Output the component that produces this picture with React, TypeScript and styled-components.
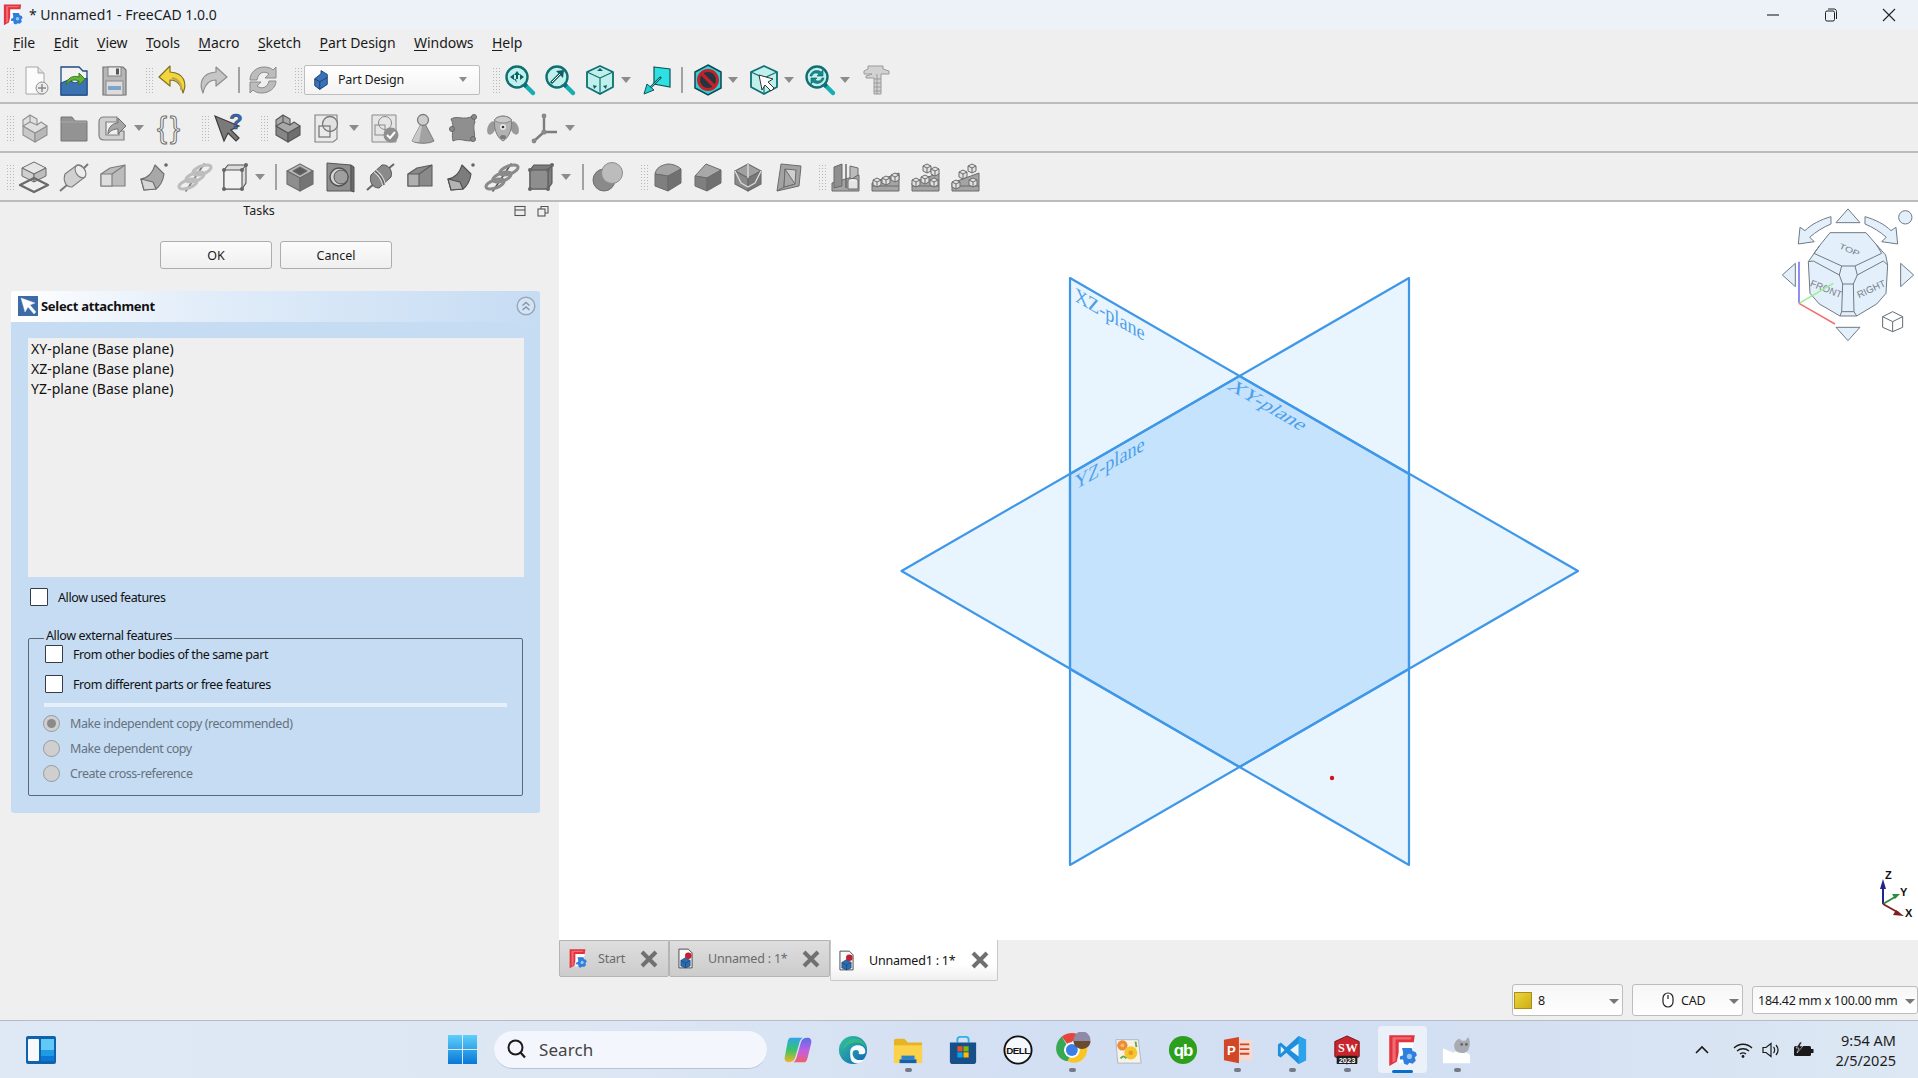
import React from "react";
import styled, { createGlobalStyle } from "styled-components";

const Global = createGlobalStyle`
  html, body { margin: 0; padding: 0; background: #efefef; overflow: hidden; }
  body { font-family: "Noto Sans", "Open Sans", "Liberation Sans", sans-serif; color: #111; }
  * { box-sizing: border-box; }
`;

const Page = styled.div`width:1918px;height:1078px;display:flex;flex-direction:column;overflow:hidden;background:#efefef;`;

/* ---------- title + menu ---------- */
const TitleBar = styled.div`height:29px;flex:none;display:flex;align-items:center;padding-left:1px;background:#edf2f9;`;
const TitleText = styled.span`font-size:14px;margin-left:5px;color:#1c1c1c;`;
const WinControls = styled.div`margin-left:auto;display:flex;`;
const WinBtn = styled.div`width:58px;height:29px;display:flex;align-items:center;justify-content:center;`;
const MenuBar = styled.div`height:26px;flex:none;display:flex;align-items:center;gap:18.5px;padding-left:13px;`;
const MenuItem = styled.span`font-size:14px;letter-spacing:-.05px;color:#1a1a1a;u{text-underline-offset:2px;text-decoration-thickness:1px;}`;

/* ---------- toolbars ---------- */
const Toolbar = styled.div<{ $h: number; $pt?: number }>`height:${p => p.$h}px;padding-top:${p => p.$pt || 0}px;flex:none;display:flex;align-items:center;border-bottom:2px solid #bcbcbc;`;
const Grip = styled.div<{ $ml: number }>`width:8px;height:26px;margin-left:${p => p.$ml}px;flex:none;background-image:radial-gradient(#b8b8b8 .9px,transparent 1px);background-size:3px 3px;`;
const Sep = styled.div<{ $ml: number }>`width:2px;height:26px;margin-left:${p => p.$ml}px;flex:none;background:#a2a2a2;`;
const ToolIcon = styled.div<{ $ml: number }>`width:32px;height:32px;margin-left:${p => p.$ml}px;flex:none;svg{display:block;overflow:visible;}`;
const Drop = styled.div<{ $ml: number }>`width:12px;height:6px;margin-left:${p => p.$ml}px;flex:none;display:flex;justify-content:center;
  &::before{content:"";border-left:5px solid transparent;border-right:5px solid transparent;border-top:6px solid #8c8c8c;}`;
const WbCombo = styled.div`width:176px;height:30px;margin-left:2px;flex:none;display:flex;align-items:center;padding-left:6px;border:1px solid #bdbdbd;border-radius:2px;background:linear-gradient(#fff,#f3f3f3);font-size:12.5px;letter-spacing:-.2px;color:#1a1a1a;`;
const WbLabel = styled.span`margin-left:7px;flex:1;`;
const WbArrow = styled.i`margin-right:12px;border-left:4px solid transparent;border-right:4px solid transparent;border-top:5px solid #8c8c8c;`;

/* ---------- main ---------- */
const Main = styled.div`flex:1;min-height:0;display:flex;`;
const Dock = styled.div`width:559px;flex:none;display:flex;flex-direction:column;background:#efefef;`;
const DockHead = styled.div`height:18px;display:flex;align-items:center;justify-content:center;position:relative;padding:0 41px 2px 0;font-size:12.5px;color:#222;`;
const DockIcons = styled.div`position:absolute;right:10px;top:3px;display:flex;gap:11px;`;
const ButtonRow = styled.div`display:flex;gap:8px;margin:21px 0 0 160px;`;
const PushBtn = styled.div`width:112px;height:28px;display:flex;align-items:center;justify-content:center;border:1px solid #adadad;border-radius:3px;background:linear-gradient(#fbfbfb,#efefef);font-size:12.5px;color:#1a1a1a;`;
const TaskBox = styled.div`width:529px;margin:22px 0 0 11px;border-radius:3px;overflow:hidden;`;
const TaskHead = styled.div`height:31px;display:flex;align-items:center;padding:0 4px 2px 7px;background:linear-gradient(90deg,#fff 0%,#e2edf9 35%,#c6dcf3 100%);`;
const TaskTitle = styled.span`font-size:13px;font-weight:700;letter-spacing:-.3px;margin-left:3px;color:#111;flex:1;`;
const TaskBody = styled.div`background:#c5dcf3;padding:16px 16px 17px 17px;height:491px;`;
const ListBox = styled.div`width:496px;height:239px;background:#efefef;padding:1px 3px;font-size:14px;line-height:20px;letter-spacing:.08px;color:#111;`;
const CheckRow = styled.div<{ $ml: number; $mt: number }>`display:flex;align-items:center;height:18px;margin:${p => p.$mt}px 0 0 ${p => p.$ml}px;font-size:12.5px;letter-spacing:-.4px;color:#111;`;
const Check = styled.span`width:18px;height:18px;flex:none;background:#fff;border:1.5px solid #333c48;border-radius:1px;margin-right:10px;`;
const Group = styled.fieldset`margin:23px 0 0 0;width:495px;height:167px;padding:0 15px;border:1px solid #5c6878;border-radius:2px;`;
const GroupLegend = styled.legend`margin-left:0;padding:0 2px 4px;font-size:12.5px;letter-spacing:-.38px;line-height:14px;color:#111;`;
const Rule = styled.div`height:4px;margin-top:10px;background:#e6f0fa;`;
const RadioRow = styled.div<{ $mt: number }>`display:flex;align-items:center;height:17px;margin-top:${p => p.$mt}px;font-size:12.5px;letter-spacing:-.44px;color:#66727e;`;
const Radio = styled.span<{ $on?: boolean }>`width:17px;height:17px;margin:0 10px 0 -1px;flex:none;border-radius:50%;border:1.5px solid #9a9a9a;background:#cfcfcf;display:flex;align-items:center;justify-content:center;
  &::after{content:"";width:9px;height:9px;border-radius:50%;background:${p => (p.$on ? "#8a8a8a" : "transparent")};}`;

const Center = styled.div`flex:1;min-width:0;display:flex;flex-direction:column;`;
const Viewport = styled.div`height:738px;flex:none;background:#fff;svg{display:block;}`;
const TabBar = styled.div`flex:1;display:flex;align-items:flex-start;`;
const Tab = styled.div<{ $w: number; $active?: boolean }>`width:${p => p.$w}px;height:${p => (p.$active ? 41 : 37)}px;flex:none;display:flex;align-items:center;font-size:12.5px;letter-spacing:-.2px;
  border:1px solid ${p => (p.$active ? "#c8c8c8" : "#b4b4b4")};border-top:${p => (p.$active ? "none" : "1px solid #b4b4b4")};border-radius:0 0 2px 2px;
  color:${p => (p.$active ? "#111" : "#6b6b6b")};background:${p => (p.$active ? "linear-gradient(#fff 60%,#f0f0f0)" : "linear-gradient(#dedede,#cccccc)")};`;
const TabIcon = styled.span<{ $ml: number }>`margin-left:${p => p.$ml}px;display:flex;flex:none;`;
const TabText = styled.span<{ $ml: number }>`margin-left:${p => p.$ml}px;flex:1;white-space:nowrap;`;
const TabClose = styled.span<{ $mr: number }>`margin-right:${p => p.$mr}px;display:flex;flex:none;`;

const StatusBar = styled.div`height:40px;flex:none;display:flex;align-items:center;justify-content:flex-end;gap:9px;`;
const StatusCombo = styled.div<{ $w: number; $h: number }>`width:${p => p.$w}px;height:${p => p.$h}px;flex:none;display:flex;align-items:center;border:1px solid #bdbdbd;border-radius:3px;background:linear-gradient(#f6f6f6,#fff);font-size:12.5px;letter-spacing:-.25px;color:#1a1a1a;`;
const Swatch = styled.span`width:18px;height:17px;margin-left:1px;background:linear-gradient(135deg,#ecd43e,#cfae12);border:1px solid #a68f1e;flex:none;`;
const ComboText = styled.span<{ $ml: number }>`margin-left:${p => p.$ml}px;flex:1;white-space:nowrap;display:flex;align-items:center;`;
const MouseIc = styled.svg`margin-right:7px;flex:none;`;
const ComboArrow = styled.i<{ $mr: number }>`margin:3px ${p => p.$mr}px 0 0;border-left:5px solid transparent;border-right:5px solid transparent;border-top:5px solid #777;flex:none;`;

/* ---------- taskbar ---------- */
const Taskbar = styled.div`height:58px;flex:none;display:flex;align-items:center;padding-left:26px;border-top:1px solid #b6bcc6;background:linear-gradient(90deg,#dfe9f5 0%,#dde7f4 30%,#d2def2 55%,#d3dff2 75%,#dde8f4 100%);`;
const Slot = styled.div<{ $w: number; $ml?: number; $active?: boolean; $dot?: boolean }>`width:${p => p.$w}px;height:47px;flex:none;margin-left:${p => p.$ml || 0}px;display:flex;align-items:center;justify-content:center;position:relative;svg{display:block;}
  ${p => p.$active ? "&::before{content:'';position:absolute;left:3px;right:3px;top:0;bottom:0;border-radius:4px;background:rgba(255,255,255,.55);}&::after{content:'';position:absolute;left:17px;right:17px;bottom:0;height:3px;border-radius:2px;background:#0a6fc4;}svg{position:relative;}" : ""}
  ${p => p.$dot ? "&::after{content:'';position:absolute;left:50%;margin-left:-3.5px;bottom:1px;width:7px;height:4px;border-radius:2px;background:#747b86;}" : ""}`;
const SearchPill = styled.div`width:273px;height:38px;margin-left:17px;flex:none;display:flex;align-items:center;padding-left:13px;border-radius:19px;background:#f3f6fc;border-bottom:1px solid #b9c2d0;font-size:17px;color:#444;`;
const SearchLabel = styled.span`margin-left:12px;letter-spacing:.1px;`;
const Tray = styled.div`margin-left:auto;display:flex;align-items:center;padding-right:22px;`;
const TrayIcon = styled.div<{ $ml: number }>`margin-left:${p => p.$ml}px;display:flex;flex:none;`;
const Clock = styled.div`margin-left:21px;text-align:right;font-size:14.5px;line-height:20px;color:#1c1c1c;`;

/* ---------- icon art ---------- */
type N = React.ReactNode;
const T = "#0f6f72"; const C = "#bff0ec";
const lblock = (a: string, b: string, c: string, s: string): N => (
  <g stroke={s} strokeWidth="1.1" strokeLinejoin="round">
    <path d="M4 14 16 21v9L4 23z" fill={b} /><path d="M16 21l12-7v9l-12 7z" fill={c} />
    <path d="M4 14V8l7-5 7 4v6l4-3 6 4-12 7z" fill={a} /><path d="M11 3v7l-7 4M11 10l7 3" fill="none" />
  </g>
);
const mag = (inner: N): N => (
  <g><path d="M20 20l9 9" stroke="#16aeb0" strokeWidth="4.5" strokeLinecap="round" /><path d="M21 21l1.5 1.5" stroke={T} strokeWidth="4" />
    <circle cx="13" cy="13" r="10.5" fill={C} stroke={T} strokeWidth="2.4" />{inner}</g>
);
const wirecube = (inner: N): N => (
  <g stroke={T} strokeLinejoin="round"><path d="M16 2l13 6v15l-13 7-13-7V8z" fill={C} strokeWidth="1.8" />
    <path d="M3 8l13 6 13-6M16 14v16" fill="none" strokeWidth="1.2" />{inner}</g>
);
const revolve = (f1: string, f2: string, s: string): N => (
  <g stroke={s} strokeWidth="1.1"><path d="M2 30l7-6M25 8l5-5" strokeWidth="2" />
    <path d="M7 13 19 4c5-1 10 5 8 12L14 26c-7 0-9-7-7-13z" fill={f1} /><ellipse cx="22.5" cy="10.5" rx="4.5" ry="7" transform="rotate(-35 22.5 10.5)" fill={f2} /></g>
);
const loft = (f1: string, f2: string, s: string): N => (
  <g stroke={s} strokeWidth="1.1" strokeLinejoin="round"><path d="M12 7 27 4v21L3 25V13z" fill={f1} /><path d="M3 13h11v12H3z" fill={f2} /><path d="M14 13 27 4" fill="none" /></g>
);
const pipe = (f1: string, f2: string, s: string): N => (
  <g stroke={s} strokeWidth="1.1" strokeLinejoin="round"><path d="M3 18c7-1 12-7 14-14l9 9c-1 7-4 12-8 15L6 29z" fill={f1} /><path d="M3 18l12 3 3 7-12 1z" fill={f2} /><circle cx="28" cy="4" r="1.8" fill="#666" stroke="none" /></g>
);
const helix = (f: string, s: string): N => (
  <g fill="none" strokeLinecap="round"><path d="M8 30 26 3" stroke={s} strokeWidth="1.6" />
    {[0, 7, 14].map(d => (<ellipse key={d} cx={10 + d} cy={23 - d} rx="9.5" ry="4" transform={`rotate(-20 ${10 + d} ${23 - d})`} stroke={f} strokeWidth="3" />))}</g>
);
const prim = (f1: string, f2: string): N => (
  <g stroke="#555" strokeWidth="1.1"><path d="M9 4h18v18l-4 6H5V9z" fill={f1} /><path d="M5 9h18v19H5z" fill={f2} /><path d="M23 9l4-5" />
    {[[5, 9], [23, 9], [27, 4], [5, 28], [23, 28]].map(([x, y]) => <circle key={`${x}${y}`} cx={x} cy={y} r="2" fill="#666" stroke="none" />)}</g>
);
const hexBox = (t: string, l: string, r: string, extra?: N): N => (
  <g stroke="#6c6c6c" strokeWidth="1.1" strokeLinejoin="round"><path d="M16 3l13 7-13 7L3 10z" fill={t} /><path d="M3 10l13 7v13L3 23z" fill={l} /><path d="M29 10 16 17v13l13-7z" fill={r} />{extra}</g>
);
const pattern = (cells: [number, number][]): N => (
  <g stroke="#6a6a6a" strokeWidth="1"><path d="M2 22 29 12v18H2z" fill="#a4a4a4" /><path d="M2 25h27" fill="none" />
    {cells.map(([x, y]) => (<g key={`${x}-${y}`} transform={`translate(${x} ${y})`}><path d="M4 0l4 2v5l-4 2-4-2V2z" fill="#e2e2e2" /><path d="M0 2l4 2 4-2M4 4v5" fill="none" /></g>))}</g>
);
const arrowIn = <path d="M13 7l3 4h-2v4h-2v-4h-2zM13 19l-3-4h2M6 13l4-3v6zM20 13l-4-3v6z" fill="#0f5f62" />;

const ICONS: Record<string, N> = {
  new: <g><path d="M7 3h12l6 6v21H7z" fill="#fbfbfb" stroke="#a6a6a6" /><path d="M19 3v6h6" fill="#dedede" stroke="#a6a6a6" /><circle cx="23" cy="24" r="6" fill="#ececec" stroke="#8f8f8f" /><path d="M23 20v8M19 24h8" stroke="#888" strokeWidth="1.4" /></g>,
  open: <g><path d="M3 3h18l4 4h4v24H3z" fill="#f2f2f2" stroke="#1f4a86" strokeWidth="1.3" /><path d="M3 19l7-3 7 3 12-5v17H3z" fill="#3a72b2" stroke="#1f4a86" /><path d="M8 21c1-7 7-10 13-8V9l6 6-6 6v-4c-5-2-9-1-13 4z" fill="#63b436" stroke="#3a7a1a" /></g>,
  save: <g><path d="M5 3h20l3 3v25H5z" fill="#b6b6b6" stroke="#747474" strokeWidth="1.2" /><rect x="10" y="3" width="13" height="9" fill="#eee" stroke="#808080" /><rect x="18" y="4.5" width="3" height="6" fill="#555" /><rect x="8" y="17" width="17" height="14" fill="#dcdcdc" stroke="#888" /><rect x="10" y="22" width="13" height="4" fill="#7ea5c8" /></g>,
  undo: <g><path d="M13 2 2 13l11 9v-6c6 0 11 4 13 13 4-9 2-20-13-21z" fill="#f3d63d" stroke="#807020" strokeWidth="1.2" strokeLinejoin="round" /><path d="M24 26c1-6-3-11-9-12" fill="none" stroke="#b9a94c" strokeWidth="2" /></g>,
  redo: <path d="M19 3l11 10-11 9v-6c-6 0-11 4-13 13-4-9-2-20 13-21z" fill="#c6c6c6" stroke="#8e8e8e" strokeWidth="1.2" strokeLinejoin="round" />,
  refresh: <g fill="#bcbcbc" stroke="#8a8a8a" strokeLinejoin="round"><path d="M3 16C3 8 10 3 17 3c4 0 7 1 9 3l3-3v11H18l4-4c-5-4-11-1-12 6z" /><path d="M29 17c0 7-7 12-14 12-4 0-7-1-9-3l-3 3V18h11l-4 4c5 4 11 1 12-5z" /></g>,
  fit: mag(arrowIn),
  fitsel: mag(<g><path d="M7 19 17 9" stroke="#0f5f62" strokeWidth="3" /><path d="M20 6l-8 1 7 7z" fill="#0f5f62" /><path d="M8 18 16 10" stroke="#fff" strokeWidth="1" /></g>),
  cube: wirecube(<g fill="#0f5f62" stroke="none"><path d="M16 4l3 3h-6zM9 21l4 1-3 3zM23 21l-4 1 3 3z" /></g>),
  plane: <g><path d="M13 3l16 2v18l-16-3z" fill="#2ee0e2" stroke="#0c5458" strokeWidth="1.2" /><path d="M20 13 8 25" stroke="#0c5458" strokeWidth="2.4" /><path d="M19 14 9 24" stroke="#38d6d8" strokeWidth=".9" /><path d="M3 30l3-10 7 6z" fill="#1fd0d2" stroke="#0c5458" /></g>,
  noshade: <g><path d="M16 1l13 7v16l-13 7-13-7V8z" fill="#2ed0d4" stroke="#0a4750" strokeWidth="1.5" /><circle cx="16" cy="16" r="9.5" fill="#21363e" stroke="#c71f2b" strokeWidth="3" /><path d="M9.5 9.5l13 13" stroke="#c71f2b" strokeWidth="3.2" /></g>,
  cubesel: wirecube(<path d="M11 11l3 15 3-5 6 6 3-3-6-6 5-3z" fill="#fff" stroke="#333" />),
  magref: mag(<g fill="#168a8c" stroke="#0f5f62" strokeWidth=".6"><path d="M6 12c1-5 7-7 11-4l2-2v6h-6l2-2c-3-2-6-1-7 2zM20 14c-1 5-7 7-11 4l-2 2v-6h6l-2 2c3 2 6 1 7-2z" /></g>),
  caliper: <g fill="#d2d2d2" stroke="#9a9a9a"><path d="M8 2h15v3l6 2v3h-8v20h-7V14H6v-2l6-2H4V7l4-2z" /><path d="M14 15h7M14 19h7M14 23h7M14 27h7" fill="none" /><path d="M17 10v20" fill="none" /></g>,
  stack: lblock("#e0e0e0", "#c8c8c8", "#b8b8b8", "#8f8f8f"),
  folder: <g><path d="M3 5h11l3 4h12v20H3z" fill="#939393" stroke="#757575" /><path d="M3 10h26" stroke="#a8a8a8" /></g>,
  link: <g><path d="M8 5h13v5H10v13h13v-4h5v9H8c-3 0-5-2-5-5V10c0-3 2-5 5-5z" fill="#d0d0d0" stroke="#808080" strokeWidth="1.2" /><path d="M12 22c0-7 5-11 10-11V6l8 8-8 8v-5c-4 0-7 1-10 5z" fill="#a6a6a6" stroke="#6e6e6e" /></g>,
  brace: <text x="16" y="26" textAnchor="middle" fontFamily="'Liberation Sans', sans-serif" fontSize="30" letterSpacing="3" fill="#fbfbfb" stroke="#6f6f6f" strokeWidth="1">{"{}"}</text>,
  whats: <g><path d="M3 4l9 25 4-8 8 8 3-3-8-8 8-4z" fill="#7a7a7a" stroke="#3c3c3c" strokeWidth="1.2" /><text x="24" y="17" textAnchor="middle" fontFamily="'Liberation Sans', sans-serif" fontWeight="700" fontSize="22" fill="#3a68a8" stroke="#20406e" strokeWidth=".5">?</text></g>,
  part: lblock("#a8a8a8", "#868686", "#6f6f6f", "#555"),
  sketch: <g><path d="M3 3h22v24l-4 3H3z" fill="#eaeaea" stroke="#808080" strokeWidth="1.1" /><circle cx="18" cy="12" r="7.5" fill="#e2e2e2" stroke="#7a7a7a" strokeWidth="1.3" /><rect x="7" y="14" width="11" height="11" fill="none" stroke="#7a7a7a" strokeWidth="1.3" /></g>,
  sketchok: <g><path d="M3 3h24v27H3z" fill="#e6e6e6" stroke="#8a8a8a" /><circle cx="16" cy="11" r="6.5" fill="none" stroke="#8a8a8a" /><rect x="6" y="13" width="10" height="10" fill="none" stroke="#8a8a8a" /><circle cx="22" cy="23" r="7.5" fill="#8f8f8f" /><path d="M18 23l3 3 5-6" fill="none" stroke="#fff" strokeWidth="2" /></g>,
  cone: <g><path d="M16 8 27 29c-5 3-17 3-22 0z" fill="#a2a2a2" stroke="#7a7a7a" /><path d="M16 8 12 30c-2 0-5-.4-7-1z" fill="#c8c8c8" /><circle cx="16" cy="8" r="5.5" fill="#cdcdcd" stroke="#7c7c7c" strokeWidth="1.3" /></g>,
  sheet: <g><path d="M4 7c7-4 12 2 22-3l2 6c-3 6 1 11-1 18-8 3-13-3-21 1-2-7 2-15-2-22z" fill="#8f8f8f" stroke="#6c6c6c" /><circle cx="27" cy="5" r="2.5" fill="#8a8a8a" stroke="#666" /><circle cx="5" cy="17" r="2.5" fill="#8a8a8a" stroke="#666" /><circle cx="26" cy="27" r="2.5" fill="#8a8a8a" stroke="#666" /></g>,
  sheep: <g><ellipse cx="4.5" cy="16" rx="4" ry="7" fill="#9a9a9a" transform="rotate(20 4.5 16)" /><ellipse cx="27.5" cy="16" rx="4" ry="7" fill="#9a9a9a" transform="rotate(-20 27.5 16)" /><path d="M8 7c4-4 12-4 16 0 2 7-1 18-8 22-7-4-10-15-8-22z" fill="#b2b2b2" stroke="#7c7c7c" /><path d="M7 8c5-5 13-5 18 0-5 4-13 4-18 0z" fill="#c9c9c9" stroke="#8c8c8c" /><circle cx="16" cy="15" r="3" fill="#e8e8e8" /><circle cx="16" cy="15" r="1.3" fill="#333" /><ellipse cx="16" cy="25" rx="3" ry="2" fill="#7a7a7a" /></g>,
  axes: <g stroke="#7c7c7c" strokeWidth="2.4" fill="#8a8a8a"><path d="M15 3v17M15 20 5 29M15 20h13" fill="none" /><circle cx="15" cy="4" r="2.4" stroke="none" /><circle cx="15" cy="20" r="2.6" stroke="none" /><circle cx="5" cy="29" r="2.4" stroke="none" /></g>,
  pad: <g stroke="#6a6a6a" strokeLinejoin="round"><path d="M16 1l12 6-12 6L4 7z" fill="#e6e6e6" /><path d="M4 7l12 6v8L4 15z" fill="#cfcfcf" /><path d="M28 7 16 13v8l12-6z" fill="#bdbdbd" /><path d="M16 17 30 24 16 31 2 24z" fill="none" strokeWidth="2.4" /></g>,
  revolve: revolve("#d0d0d0", "#ececec", "#7a7a7a"),
  loft: loft("#bcbcbc", "#dedede", "#7c7c7c"),
  pipeA: pipe("#a8a8a8", "#d6d6d6", "#6c6c6c"),
  helixA: helix("#bdbdbd", "#777"),
  primA: prim("#dcdcdc", "#f2f2f2"),
  pocket: hexBox("#bcbcbc", "#8e8e8e", "#757575", <path d="M16 6l7 4-7 4-7-4z" fill="#5c5c5c" />),
  hole: <g stroke="#555" strokeLinejoin="round"><path d="M3 2l24 2v26H3z" fill="#8f8f8f" /><path d="M27 4l3 2v25l-3-1z" fill="#6a6a6a" /><circle cx="15" cy="16" r="9" fill="#d4d4d4" stroke="#4e4e4e" strokeWidth="1.4" /><circle cx="17" cy="16" r="7" fill="#9f9f9f" /></g>,
  groove: <g><path d="M2 29l9-8M23 8l6-5" stroke="#666" strokeWidth="2" /><path d="M6 14 17 4c6-1 11 5 9 12L14 27c-7 0-10-7-8-13z" fill="#8a8a8a" stroke="#555" /><path d="M10 10c4 3 8 8 9 14" stroke="#ddd" strokeWidth="4" fill="none" /><path d="M10 10c4 3 8 8 9 14" stroke="#666" strokeWidth="1.6" fill="none" /></g>,
  sloft: loft("#8a8a8a", "#b0b0b0", "#5c5c5c"),
  spipe: pipe("#7c7c7c", "#b4b4b4", "#4e4e4e"),
  shelix: helix("#8a8a8a", "#555"),
  primS: prim("#7c7c7c", "#8e8e8e"),
  bool: <g><circle cx="12" cy="19" r="11" fill="#8a8a8a" stroke="#707070" /><circle cx="20" cy="12" r="10.5" fill="#bcbcbc" stroke="#8c8c8c" /></g>,
  fillet: <g stroke="#6c6c6c" strokeLinejoin="round"><path d="M3 13c1-6 6-9 13-10 5 0 10 2 13 5L16 15z" fill="#a4a4a4" /><path d="M3 13l13 2v15L3 25z" fill="#7f7f7f" /><path d="M29 8v14L16 30V15z" fill="#707070" /></g>,
  chamfer: <g stroke="#6c6c6c" strokeLinejoin="round"><path d="M3 15 14 3l15 6-14 8z" fill="#a8a8a8" /><path d="M3 15l12 2v13L3 25z" fill="#7f7f7f" /><path d="M29 9v13L15 30V17z" fill="#707070" /></g>,
  draft: hexBox("#a0a0a0", "#8a8a8a", "#787878", <path d="M16 3v14M3 10l6 12 7 4 7-4 6-12" fill="none" stroke="#dedede" strokeWidth="1.3" />),
  thick: <g stroke="#6c6c6c" strokeLinejoin="round"><path d="M8 3l20 2-2 20-22 5z" fill="#a2a2a2" /><path d="M12 8l11 1-1 14-11 3z" fill="#cfcfcf" /><path d="M12 8l-1 18 11-3z" fill="#a8a8a8" /><path d="M4 30l7-4" /></g>,
  mirror: <g stroke="#6a6a6a"><path d="M2 22 29 14v16H2z" fill="#a4a4a4" /><path d="M4 6l8-3v22l-8 2z" fill="#8e8e8e" /><path d="M16 3v24" strokeWidth="1.5" /><path d="M20 5l8 2v7l-8 5z" fill="#bcbcbc" /><ellipse cx="23" cy="20" rx="5" ry="2.5" fill="#eee" /><path d="M18 20v8h10v-8" fill="#e4e4e4" /></g>,
  linear: pattern([[3, 17], [12, 15], [21, 12]]),
  polar: pattern([[2, 17], [11, 14], [20, 17], [13, 3], [21, 6]]),
  multi: pattern([[2, 19], [9, 9], [18, 3], [19, 17]]),
};

const Tool = ({ n, ml }: { n: string; ml: number }) => (
  <ToolIcon $ml={ml}><svg width="32" height="32" viewBox="0 0 32 32">{ICONS[n]}</svg></ToolIcon>
);

const FreeCADLogo = ({ s }: { s: number }) => (
  <svg width={s} height={s} viewBox="0 0 32 32">
    <path d="M4 2h24l-1 7H13v9l-2 9-7 4z" fill="#e2333f" /><path d="M7 4h18l-1 2H10v20l-3 2z" fill="#f06a72" />
    <path d="M13 9h14l-1 5h-9v3h6v5h-6v5l-4 2z" fill="#fff" />
    <path d="M16 14h9l1 3 3 1 1 3-2 2 1 3-3 3-3-1-2 2-3-1-1-4h-3v-3l3-1v-3z" fill="#2f7fdc" />
    <circle cx="23" cy="22" r="2.4" fill="#9cc6f2" />
  </svg>
);
const DocIcon = () => (
  <svg width="15" height="21" viewBox="0 0 16 22"><path d="M1 1h10l4 4v16H1z" fill="#fafafa" stroke="#444" />
    <path d="M3 13l5-3 5 3v6l-5 2-5-2z" fill="#2b6cb0" stroke="#143d6c" strokeWidth=".6" /><path d="M3 13l5 3 5-3M8 16v5" stroke="#143d6c" strokeWidth=".6" fill="none" />
    <circle cx="11" cy="8" r="3.5" fill="#c02030" /></svg>
);
const CloseX = () => (
  <svg width="18" height="18" viewBox="0 0 18 18"><path d="M2 2l14 14M16 2 2 16" stroke="#707070" strokeWidth="4" /></svg>
);

const IconBox = ({ w = 30, h = 30, children }: { w?: number; h?: number; children: N }) => (
  <svg width={w} height={h} viewBox="0 0 32 32">{children}</svg>
);

const Copilot = () => (<IconBox><defs><linearGradient id="cp" x1="0" y1="0" x2="0" y2="1"><stop offset="0" stopColor="#2fa4e8" /><stop offset=".5" stopColor="#38c46a" /><stop offset="1" stopColor="#f5b321" /></linearGradient><linearGradient id="cp2" x1="0" y1="0" x2="0" y2="1"><stop offset="0" stopColor="#5a6fe8" /><stop offset=".55" stopColor="#c45ee0" /><stop offset="1" stopColor="#f0606a" /></linearGradient></defs>
  <path d="M8 3h13c-2 1-3 3-4 7l-4 14c-1 3-3 5-7 5-3 0-5-2-4-6L5 7c.5-2 1.5-4 3-4z" fill="url(#cp)" /><path d="M24 29H11c2-1 3-3 4-7l4-14c1-3 3-5 7-5 3 0 5 2 4 6l-4 16c-.5 2-1.5 4-3 4z" fill="url(#cp2)" /></IconBox>);
const Edge = () => (<IconBox><defs><linearGradient id="ed" x1="0" y1="0" x2="1" y2="1"><stop offset="0" stopColor="#36c5a0" /><stop offset="1" stopColor="#0f62b8" /></linearGradient></defs>
  <circle cx="16" cy="16" r="15" fill="url(#ed)" /><path d="M31 18c-1-7-7-10-12-10-7 0-12 4-14 9 1-9 9-15 17-13 6 2 9 8 9 14z" fill="#3ad06a" opacity=".55" /><path d="M13 18c0-5 5-8 10-7 4 1 7 4 6 8-1 2-5 2-7 1 1-2 0-4-3-4s-4 3-3 6c1 4 6 6 12 4-3 4-8 5-12 3-3-2-3-7-3-11z" fill="#f5fbff" /></IconBox>);
const FolderIc = () => (<IconBox><path d="M1 6c0-1 1-2 2-2h9l4 4h15v21H1z" fill="#e6b325" /><path d="M1 11h30v19H1z" fill="#fbd24a" /><path d="M9 22h14v4H9z" fill="#2a82d0" /><path d="M7 26h18v4H7z" fill="#0f62b0" /></IconBox>);
const Store = () => (<IconBox><path d="M10 8V5c0-2 1-3 3-3h6c2 0 3 1 3 3v3" fill="none" stroke="#2fb0e8" strokeWidth="2" /><path d="M2 8h28v20c0 2-1 3-3 3H5c-2 0-3-1-3-3z" fill="#164f8a" /><rect x="10" y="12" width="5.5" height="5.5" fill="#f25022" /><rect x="16.5" y="12" width="5.5" height="5.5" fill="#7fba00" /><rect x="10" y="18.5" width="5.5" height="5.5" fill="#00a4ef" /><rect x="16.5" y="18.5" width="5.5" height="5.5" fill="#ffb900" /></IconBox>);
const Dell = () => (<IconBox><circle cx="16" cy="16" r="14.5" fill="#f5f8fc" stroke="#111" strokeWidth="2" /><text x="16" y="20" textAnchor="middle" fontFamily="'Liberation Sans', sans-serif" fontWeight="700" fontSize="10.5" letterSpacing="-.6" fill="#111">DELL</text></IconBox>);
const Chrome = () => (<IconBox w={36} h={36}><path d="M15 16 6 4a14 14 0 0 1 21 4H15z" fill="#e6453a" /><path d="M1 15C1 10 3 7 6 4l9 15-4 7C5 25 1 20 1 15z" fill="#37a853" /><path d="M27 8c3 5 2 12-2 16s-9 4-14 2l6-8 9-10z" fill="#f9c524" /><circle cx="15" cy="16" r="7" fill="#fff" /><circle cx="15" cy="16" r="5.3" fill="#3a7fe8" /><circle cx="24" cy="7" r="7.5" fill="#8f8aa8" /><path d="M16.5 8h15c0 4-3 7-7.5 7s-7.5-3-7.5-7z" fill="#6a4a32" /></IconBox>);
const Photos = () => (<IconBox><path d="M3 5h24l3 25H5z" fill="#f6f3e6" stroke="#a9b6c8" /><circle cx="10" cy="11" r="5.5" fill="#ee8a3a" /><circle cx="10" cy="11" r="2" fill="#f7c25a" /><circle cx="19" cy="19" r="7" fill="#f3c531" /><circle cx="19" cy="19" r="2.5" fill="#e89a20" /><path d="M8 25c3-3 4-3 6 0M24 7l1 6" stroke="#62a84a" strokeWidth="2" fill="none" /></IconBox>);
const QB = () => (<IconBox><circle cx="16" cy="16" r="15" fill="#2ca01c" /><text x="16" y="22" textAnchor="middle" fontFamily="'Liberation Sans', sans-serif" fontWeight="700" fontSize="18" letterSpacing="-1" fill="#fff">qb</text></IconBox>);
const PPT = () => (<IconBox><rect x="13" y="5" width="18" height="22" fill="#f6d9cf" /><path d="M18 10h10M18 15h10M18 20h10" stroke="#d24726" strokeWidth="2" /><path d="M1 5 17 2v28L1 27z" fill="#d24726" /><text x="9" y="21" textAnchor="middle" fontFamily="'Liberation Sans', sans-serif" fontWeight="700" fontSize="14" fill="#fff">P</text></IconBox>);
const VSCode = () => (<IconBox><path d="M23 1l8 4v22l-8 4-13-12-6 5-3-2v-12l3-2 6 5z" fill="#1e8fdc" /><path d="M23 1l8 4v22l-8 4z" fill="#2aa3ea" /><path d="M23 9v14l-9-7z" fill="#eaf2fb" /><path d="M4 12l4 4-4 4z" fill="#eaf2fb" /></IconBox>);
const SW = () => (<IconBox w={30} h={34}><path d="M16 1l13 6v16l-13 8-13-8V7z" fill="#c8262c" stroke="#7a1014" /><text x="10" y="18" textAnchor="middle" fontFamily="'Liberation Serif', serif" fontWeight="700" fontSize="13" fill="#fff">S</text><text x="21" y="18" textAnchor="middle" fontFamily="'Liberation Serif', serif" fontWeight="700" fontSize="13" fill="#fff">W</text><rect x="5" y="22" width="22" height="9" rx="1" fill="#1d1d1d" /><text x="16" y="30" textAnchor="middle" fontFamily="'Liberation Sans', sans-serif" fontWeight="700" fontSize="8" fill="#fff">2023</text></IconBox>);
const Gimp = () => (<IconBox><path d="M1 14l11 5 8-4 10 6v9H1z" fill="#fff" /><path d="M13 12c0-4 3-8 6-8l2 2 4 0 3-4c2 3 2 8 1 11-1 5-5 7-9 6-4 0-7-3-7-7z" fill="#a8acb2" /><circle cx="21" cy="10" r="1.5" fill="#666" /><circle cx="26" cy="10" r="1.5" fill="#666" /></IconBox>);

const Plane3D = styled.svg`display:block;`;
const PlaneLabel = styled.text`font-family:"Liberation Serif",serif;font-size:21px;fill:#4d9fea;`;
const NavLabel = styled.text`font-family:"Liberation Sans",sans-serif;font-size:29px;fill:#75808a;`;
const AxisLabel = styled.text`font-family:"Liberation Sans",sans-serif;font-size:11px;font-weight:700;fill:#111;`;

const NavCube = () => (
  <g transform="translate(1750 190) scale(.3333)" stroke="#6e7983" strokeWidth="3" fill="#e3effa" strokeLinejoin="round">
    <path d="M294 57l36 41h-72z" /><path d="M97 255l39-35v70z" /><path d="M452 220l39 35-39 35z" /><path d="M258 412h72l-36 40z" />
    <path d="M243 80c-32 9-60 24-78 42l-15-10-5 50 48-7-14-13c19-17 40-30 64-40z" /><path d="M345 80c32 9 60 24 78 42l15-10 5 50-48-7 14-13c-19-17-40-30-64-40z" />
    <circle cx="466" cy="82" r="20" />
    <path d="M240 128h108l32 37 27 30 6 30-5 85-28 32-60 36h-50l-62-36-28-32-5-95 33-47z" />
    <path d="M275 228h40l7 27-12 27h-32l-10-27zM275 228l-83-38 16-22M315 228l80-38-15-25M268 255l-78-42-15 2M322 255l78-42 13 12M278 282l-3 83h37l-2-83M275 365l-5 13M312 365l8 13" fill="none" />
    <NavLabel x="0" y="0" textAnchor="middle" stroke="none" transform="translate(295 187) rotate(24) scale(1.1 .8)">TOP</NavLabel>
    <NavLabel x="0" y="0" textAnchor="middle" stroke="none" transform="translate(225 306) rotate(22)">FRONT</NavLabel>
    <NavLabel x="0" y="0" textAnchor="middle" stroke="none" transform="translate(368 306) rotate(-25)">RIGHT</NavLabel>
    <path d="M147 215v125" stroke="#6a6aee" strokeWidth="4.5" fill="none" /><path d="M147 340l103-60" stroke="#9aee96" strokeWidth="4.5" fill="none" /><path d="M147 340l108 62" stroke="#f07070" strokeWidth="4.5" fill="none" />
    <g fill="#fff" stroke="#606a72" strokeWidth="3"><path d="M428 365l30 15v32l-30 13-30-13v-32z" /><path d="M398 380l30 15 30-15M428 395v30" fill="none" /></g>
  </g>
);

const Scene = () => (
  <Plane3D width="1359" height="738" viewBox="559 202 1359 738">
    <g fill="#e8f4fe"><path d="M1070 278 1409 474V865L1070 669z" /><path d="M1409 278 1070 474V865L1409 669z" /><path d="M901.5 571 1239.5 376 1578 571 1239.5 767z" /></g>
    <path d="M1239.5 376 1409 474V669L1239.5 767 1070 669V474z" fill="#c6e3fd" />
    <g fill="none" stroke="#3f97e8" strokeWidth="2.2" strokeLinejoin="round"><path d="M1070 278 1409 474V865L1070 669z" /><path d="M1409 278 1070 474V865L1409 669z" /><path d="M901.5 571 1239.5 376 1578 571 1239.5 767z" /></g>
    <PlaneLabel transform="matrix(.866 .5 0 1 1075 301)">XZ-plane</PlaneLabel>
    <PlaneLabel transform="matrix(.866 -.5 0 1 1075 490)">YZ-plane</PlaneLabel>
    <PlaneLabel transform="matrix(.92 .53 -.75 .55 1226 388)">XY-plane</PlaneLabel>
    <circle cx="1332" cy="778" r="2.2" fill="#d8101c" />
    <NavCube />
    <g strokeWidth="2" fill="none"><path d="M1883 904V888" stroke="#23238f" /><path d="M1883 904l12-7" stroke="#2e8b3c" /><path d="M1883 904l16 9" stroke="#7e2020" /></g>
    <path d="M1883 879l-3 10h6z" fill="#23238f" /><path d="M1900 894l-8 0 3 5z" fill="#2e8b3c" /><path d="M1904 916l-8-6-3 5z" fill="#7e2020" />
    <AxisLabel x="1885" y="879">Z</AxisLabel><AxisLabel x="1900" y="896">Y</AxisLabel><AxisLabel x="1905" y="917">X</AxisLabel>
  </Plane3D>
);

export default function App() {
  return (
    <Page>
      <Global />
      <TitleBar>
        <FreeCADLogo s={23} />
        <TitleText>* Unnamed1 - FreeCAD 1.0.0</TitleText>
        <WinControls>
          <WinBtn><svg width="12" height="12" viewBox="0 0 12 12"><path d="M0 6h12" stroke="#222" strokeWidth="1.1" /></svg></WinBtn>
          <WinBtn><svg width="12" height="14" viewBox="0 0 12 14"><rect x=".5" y="3" width="9" height="10" rx="1.5" fill="none" stroke="#222" /><path d="M3 1h6c1.5 0 2.5 1 2.5 2.5V11" fill="none" stroke="#222" /></svg></WinBtn>
          <WinBtn><svg width="14" height="14" viewBox="0 0 14 14"><path d="M1 1l12 12M13 1 1 13" stroke="#222" strokeWidth="1.1" /></svg></WinBtn>
        </WinControls>
      </TitleBar>
      <MenuBar>
        <MenuItem><u>F</u>ile</MenuItem><MenuItem><u>E</u>dit</MenuItem><MenuItem><u>V</u>iew</MenuItem><MenuItem><u>T</u>ools</MenuItem>
        <MenuItem><u>M</u>acro</MenuItem><MenuItem><u>S</u>ketch</MenuItem><MenuItem><u>P</u>art Design</MenuItem><MenuItem><u>W</u>indows</MenuItem><MenuItem><u>H</u>elp</MenuItem>
      </MenuBar>
      <Toolbar $h={49} $pt={2}>
        <Grip $ml={6} /><Tool n="new" ml={5} /><Tool n="open" ml={7} /><Tool n="save" ml={8} />
        <Grip $ml={15} /><Tool n="undo" ml={4} /><Tool n="redo" ml={8} /><Sep $ml={9} /><Tool n="refresh" ml={7} />
        <Grip $ml={15} />
        <WbCombo>
          <svg width="20" height="20" viewBox="0 0 32 32"><path d="M6 14 16 6l0-5 10 6v16l-12 8-8-6z" fill="#3a72b8" stroke="#17406f" strokeWidth="1.5" strokeLinejoin="round" /><path d="M6 14l8 5v12M14 19l12-7" stroke="#17406f" strokeWidth="1.5" fill="none" /></svg>
          <WbLabel>Part Design</WbLabel><WbArrow />
        </WbCombo>
        <Grip $ml={12} /><Tool n="fit" ml={4} /><Tool n="fitsel" ml={8} /><Tool n="cube" ml={8} /><Drop $ml={4} /><Tool n="plane" ml={9} /><Sep $ml={8} />
        <Tool n="noshade" ml={9} /><Drop $ml={3} /><Tool n="cubesel" ml={9} /><Drop $ml={3} /><Tool n="magref" ml={9} /><Drop $ml={3} /><Tool n="caliper" ml={9} />
      </Toolbar>
      <Toolbar $h={49}>
        <Grip $ml={6} /><Tool n="stack" ml={5} /><Tool n="folder" ml={7} /><Tool n="link" ml={6} /><Drop $ml={5} /><Tool n="brace" ml={9} />
        <Grip $ml={15} /><Tool n="whats" ml={3} /><Grip $ml={16} /><Tool n="part" ml={4} /><Tool n="sketch" ml={8} /><Drop $ml={4} />
        <Tool n="sketchok" ml={9} /><Tool n="cone" ml={6} /><Tool n="sheet" ml={8} /><Tool n="sheep" ml={8} /><Tool n="axes" ml={10} /><Drop $ml={3} />
      </Toolbar>
      <Toolbar $h={49}>
        <Grip $ml={6} /><Tool n="pad" ml={4} /><Tool n="revolve" ml={8} /><Tool n="loft" ml={8} /><Tool n="pipeA" ml={8} /><Tool n="helixA" ml={8} /><Tool n="primA" ml={9} /><Drop $ml={3} /><Sep $ml={9} />
        <Tool n="pocket" ml={7} /><Tool n="hole" ml={8} /><Tool n="groove" ml={9} /><Tool n="sloft" ml={8} /><Tool n="spipe" ml={8} /><Tool n="shelix" ml={8} /><Tool n="primS" ml={8} /><Drop $ml={3} /><Sep $ml={10} />
        <Tool n="bool" ml={8} /><Grip $ml={16} /><Tool n="fillet" ml={4} /><Tool n="chamfer" ml={8} /><Tool n="draft" ml={8} /><Tool n="thick" ml={9} />
        <Grip $ml={13} /><Tool n="mirror" ml={4} /><Tool n="linear" ml={8} /><Tool n="polar" ml={8} /><Tool n="multi" ml={8} />
      </Toolbar>
      <Main>
        <Dock>
          <DockHead>Tasks
            <DockIcons>
              <svg width="12" height="12" viewBox="0 0 12 12"><rect x="1" y="1.5" width="10" height="9" fill="none" stroke="#555" strokeWidth="1.1" /><path d="M1 5h10" stroke="#555" strokeWidth="1.1" /></svg>
              <svg width="12" height="12" viewBox="0 0 12 12"><rect x="1" y="4" width="7" height="7" fill="none" stroke="#555" strokeWidth="1.1" /><path d="M4 4V1.5h7V8H8" fill="none" stroke="#555" strokeWidth="1.1" /></svg>
            </DockIcons>
          </DockHead>
          <ButtonRow><PushBtn>OK</PushBtn><PushBtn>Cancel</PushBtn></ButtonRow>
          <TaskBox>
            <TaskHead>
              <svg width="20" height="20" viewBox="0 0 20 20"><rect width="20" height="20" fill="#3c6ba8" /><path d="M3 2l4 14 3-5 6 7 2-2-6-7 5-2z" fill="#fff" stroke="#d8e4f2" strokeWidth=".5" /></svg>
              <TaskTitle>Select attachment</TaskTitle>
              <svg width="20" height="20" viewBox="0 0 20 20"><circle cx="10" cy="10" r="8.8" fill="#d2e4f6" stroke="#9aa8b6" strokeWidth="1.5" /><path d="M6.5 9.5 10 6.5l3.5 3M6.5 14 10 11l3.5 3" fill="none" stroke="#8794a2" strokeWidth="1.4" /></svg>
            </TaskHead>
            <TaskBody>
              <ListBox>XY-plane (Base plane)<br />XZ-plane (Base plane)<br />YZ-plane (Base plane)</ListBox>
              <CheckRow $ml={2} $mt={11}><Check />Allow used features</CheckRow>
              <Group>
                <GroupLegend>Allow external features</GroupLegend>
                <CheckRow $ml={1} $mt={-2}><Check />From other bodies of the same part</CheckRow>
                <CheckRow $ml={1} $mt={12}><Check />From different parts or free features</CheckRow>
                <Rule />
                <RadioRow $mt={8}><Radio $on />Make independent copy (recommended)</RadioRow>
                <RadioRow $mt={8}><Radio />Make dependent copy</RadioRow>
                <RadioRow $mt={8}><Radio />Create cross-reference</RadioRow>
              </Group>
            </TaskBody>
          </TaskBox>
        </Dock>
        <Center>
          <Viewport><Scene /></Viewport>
          <TabBar>
            <Tab $w={110}><TabIcon $ml={7}><FreeCADLogo s={21} /></TabIcon><TabText $ml={10}>Start</TabText><TabClose $mr={10}><CloseX /></TabClose></Tab>
            <Tab $w={161}><TabIcon $ml={8}><DocIcon /></TabIcon><TabText $ml={15}>Unnamed : 1*</TabText><TabClose $mr={9}><CloseX /></TabClose></Tab>
            <Tab $w={168} $active><TabIcon $ml={8}><DocIcon /></TabIcon><TabText $ml={15}>Unnamed1 : 1*</TabText><TabClose $mr={8}><CloseX /></TabClose></Tab>
          </TabBar>
        </Center>
      </Main>
      <StatusBar>
        <StatusCombo $w={111} $h={32}><Swatch /><ComboText $ml={6}>8</ComboText><ComboArrow $mr={3} /></StatusCombo>
        <StatusCombo $w={111} $h={32}><ComboText $ml={29}><MouseIc width="12" height="16" viewBox="0 0 12 16"><rect x="1" y="1" width="10" height="14" rx="5" fill="#fff" stroke="#222" strokeWidth="1.2" /><path d="M6 3v4" stroke="#222" strokeWidth="1.2" /></MouseIc>CAD</ComboText><ComboArrow $mr={3} /></StatusCombo>
        <StatusCombo $w={166} $h={28}><ComboText $ml={5}>184.42 mm x 100.00 mm</ComboText><ComboArrow $mr={2} /></StatusCombo>
      </StatusBar>
      <Taskbar>
        <svg width="30" height="28" viewBox="0 0 30 28"><rect width="30" height="28" rx="2" fill="#0f62ac" /><rect x="2" y="3" width="11" height="22" rx="1" fill="#f6f8fb" /><rect x="15" y="3" width="13" height="11" fill="#62c8f6" /><rect x="15" y="14" width="13" height="6" fill="#1f9be6" /><rect x="15" y="20" width="13" height="5" fill="#0a78d4" /></svg>
        <Slot $w={30} $ml={391}>
          <svg width="29" height="29" viewBox="0 0 29 29"><defs><linearGradient id="win" x1="0" y1="0" x2="0" y2="1"><stop offset="0" stopColor="#5ed0f8" /><stop offset="1" stopColor="#0878d8" /></linearGradient></defs><path d="M0 0h14v14H0zM15 0h14v14H15zM0 15h14v14H0zM15 15h14v14H15z" fill="url(#win)" /></svg>
        </Slot>
        <SearchPill>
          <svg width="20" height="20" viewBox="0 0 20 20"><circle cx="8.5" cy="8.5" r="7" fill="none" stroke="#1c1c1c" strokeWidth="2" /><path d="M13.5 13.5 18 18.5" stroke="#1c1c1c" strokeWidth="2.2" /></svg>
          <SearchLabel>Search</SearchLabel>
        </SearchPill>
        <Slot $w={54.9} $ml={4}><Copilot /></Slot><Slot $w={54.9}><Edge /></Slot><Slot $w={54.9} $dot><FolderIc /></Slot><Slot $w={54.9}><Store /></Slot><Slot $w={54.9}><Dell /></Slot>
        <Slot $w={54.9} $dot><Chrome /></Slot><Slot $w={54.9}><Photos /></Slot><Slot $w={54.9}><QB /></Slot><Slot $w={54.9} $dot><PPT /></Slot><Slot $w={54.9} $dot><VSCode /></Slot><Slot $w={54.9} $dot><SW /></Slot>
        <Slot $w={54.9} $active><FreeCADLogo s={34} /></Slot><Slot $w={54.9} $dot><Gimp /></Slot>
        <Tray>
          <TrayIcon $ml={0}><svg width="14" height="9" viewBox="0 0 14 9"><path d="M1 8l6-6 6 6" fill="none" stroke="#1a1a1a" strokeWidth="1.6" /></svg></TrayIcon>
          <TrayIcon $ml={24}><svg width="20" height="16" viewBox="0 0 20 16"><path d="M1 6c5-5 13-5 18 0M4 9c3.5-3 8.5-3 12 0M7 12c2-1.5 4-1.5 6 0" fill="none" stroke="#1a1a1a" strokeWidth="1.3" /><circle cx="10" cy="14.5" r="1.4" fill="#1a1a1a" /></svg></TrayIcon>
          <TrayIcon $ml={9}><svg width="18" height="16" viewBox="0 0 18 16"><path d="M1 5.5h3L9 1.5v13l-5-4H1z" fill="none" stroke="#1a1a1a" strokeWidth="1.2" /><path d="M11.5 5c1.5 1.5 1.5 4.5 0 6M14 3c2.5 3 2.5 7 0 10" fill="none" stroke="#1a1a1a" strokeWidth="1.2" /></svg></TrayIcon>
          <TrayIcon $ml={13}><svg width="21" height="16" viewBox="0 0 21 16"><rect x="1" y="4" width="17" height="10" rx="1.5" fill="#1a1a1a" /><rect x="18" y="7" width="2.5" height="4" fill="#1a1a1a" /><path d="M7 0 3 6h3l-2 5 6-7H7l2-4z" fill="#1a1a1a" stroke="#dfe9f5" strokeWidth=".6" /></svg></TrayIcon>
          <Clock>9:54 AM<br />2/5/2025</Clock>
        </Tray>
      </Taskbar>
    </Page>
  );
}
